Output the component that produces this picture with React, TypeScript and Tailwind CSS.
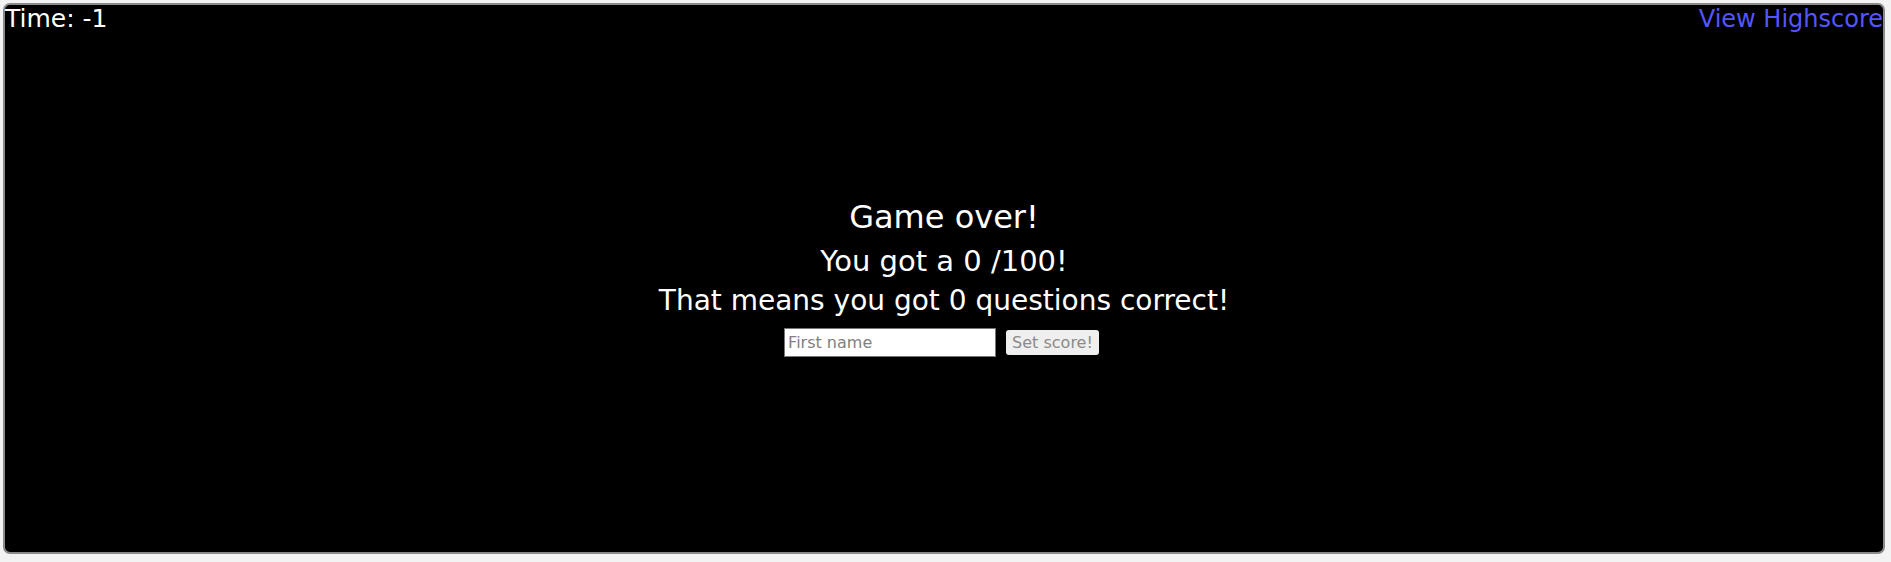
import { useState } from "react";

export default function App() {
  const [name, setName] = useState("");
  const time = -1;
  const score = 0;
  const correct = 0;

  return (
    <div className="min-h-[562px] bg-[#f3f3f3] p-[3px] font-['DejaVu_Sans',sans-serif]">
      <div className="flex h-[551px] w-[1882px] flex-col rounded-[7px] border-2 border-[#8a8a8a] bg-black text-white">
        <div className="flex items-start justify-between">
          <span className="text-[25px] leading-[28px]">Time: {time}</span>
          <a href="#" className="text-[24px] leading-[28px] text-[#5555ff]">
            View Highscore
          </a>
        </div>

        {/* end screen */}
        <div className="flex flex-1 flex-col items-center justify-center pb-[31px]">
          <h1 className="mb-[4px] text-[32px] leading-[40px]">Game over!</h1>
          <p className="text-[29px] leading-[40px]">You got a {score} /100!</p>
          <p className="text-[28px] leading-[40px]">
            That means you got {correct} questions correct!
          </p>
          <div className="mt-[7px] flex items-center gap-[10px] pr-[5px]">
            <input
              type="text"
              value={name}
              onChange={(e) => setName(e.target.value)}
              placeholder="First name"
              className="h-[29px] w-[212px] border border-[#767676] bg-white px-[3px] text-[16px] text-black placeholder:text-[#808080] outline-none"
            />
            <button
              type="button"
              disabled
              className="h-[25px] rounded-[3px] bg-[#efefef] px-[6px] text-[16px] leading-[25px] text-[#8a8a8a]"
            >
              Set score!
            </button>
          </div>
        </div>
      </div>
    </div>
  );
}
